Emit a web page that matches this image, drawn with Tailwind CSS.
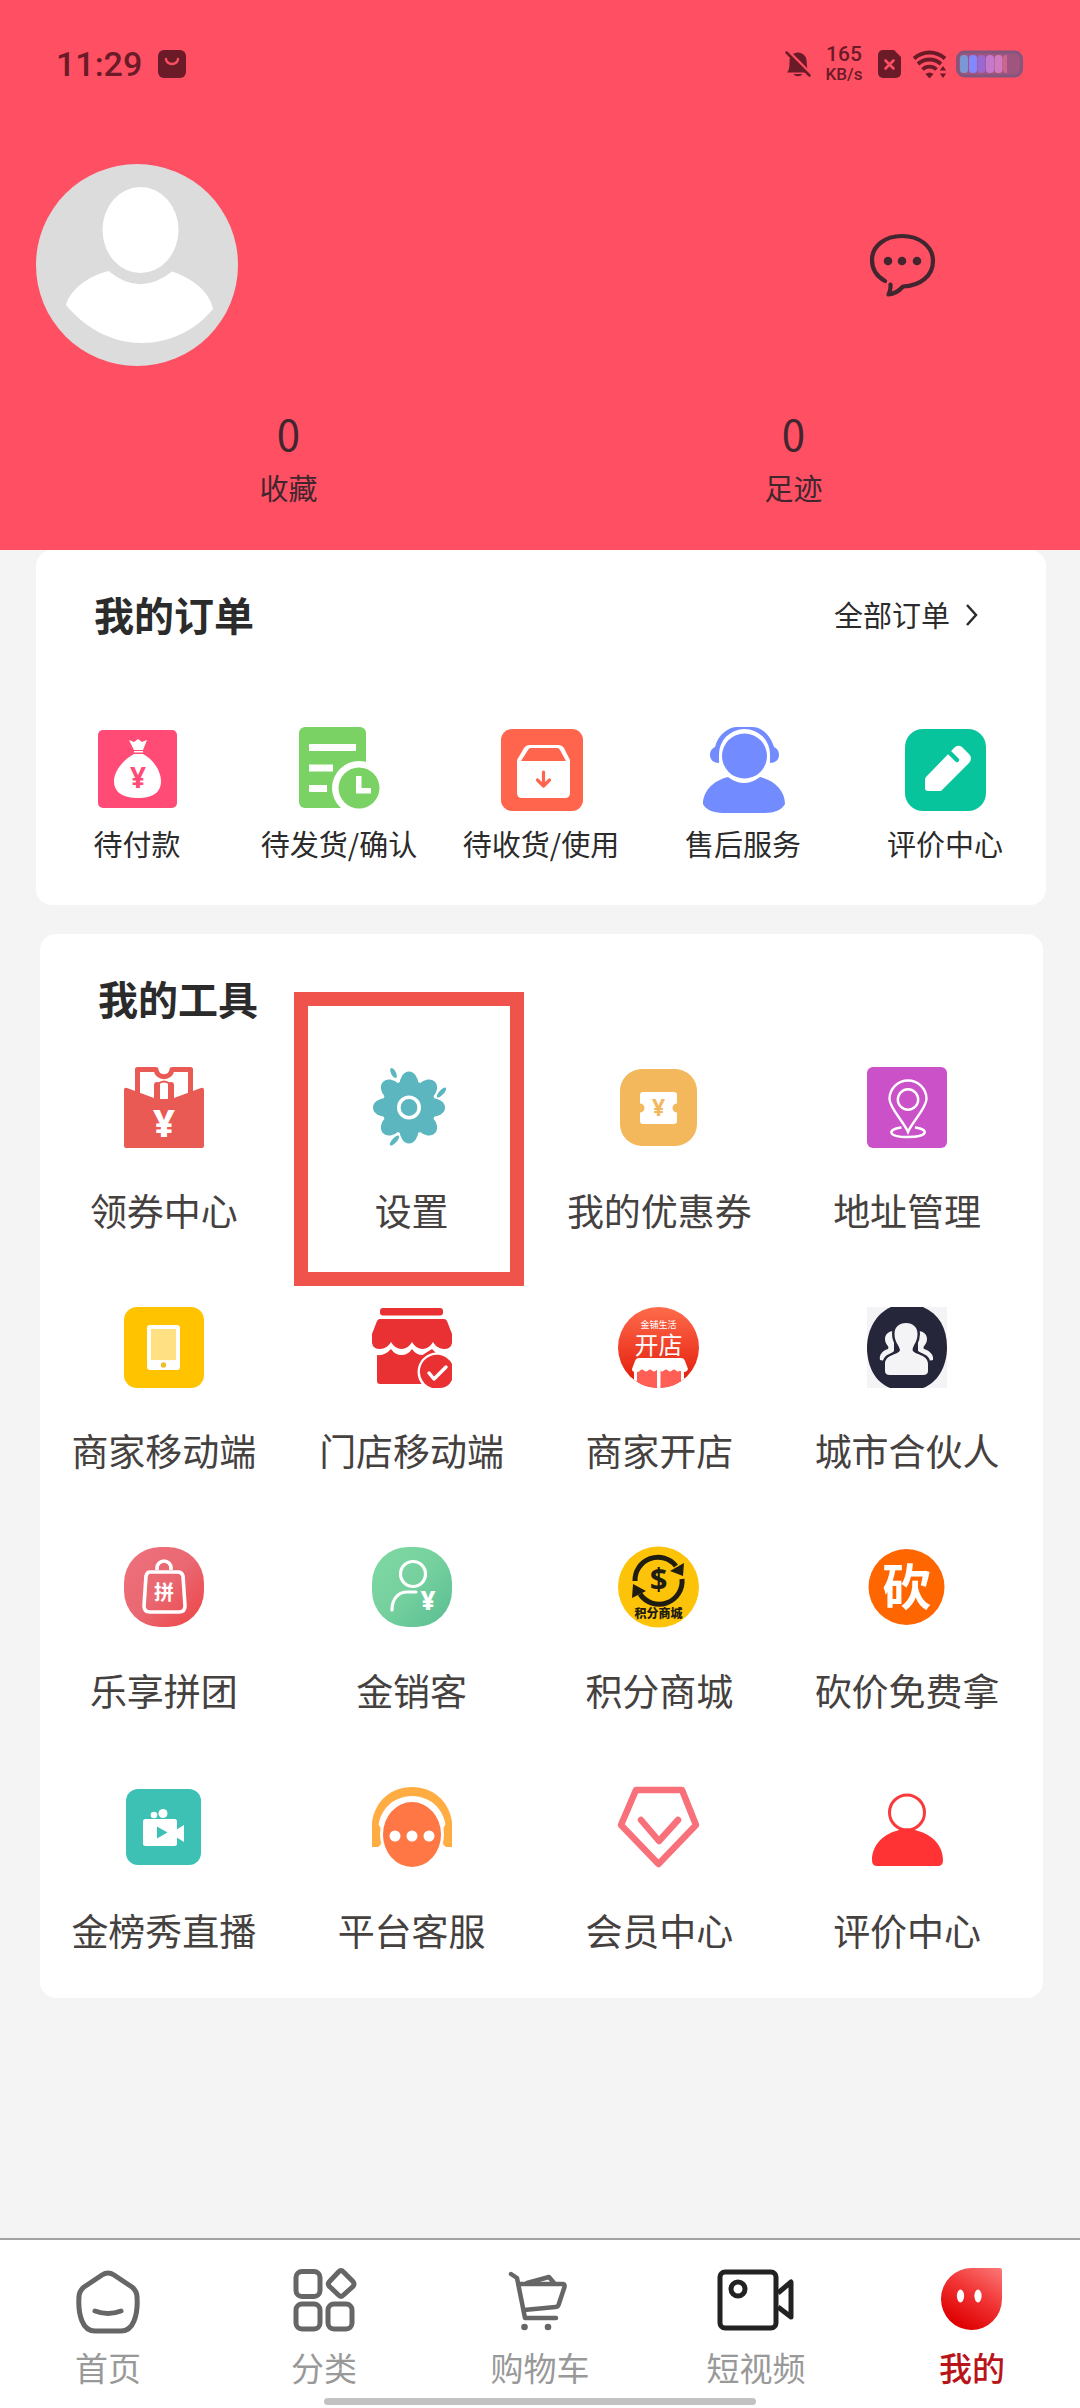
<!DOCTYPE html>
<html lang="zh-CN">
<head>
    <meta charset="UTF-8">
    <meta name="viewport" content="width=device-width, initial-scale=1.0">
    <title>我的</title>
    <script src="https://cdn.jsdelivr.net/npm/@tailwindcss/browser@4"></script>
</head>
<body class="min-h-screen flex flex-col bg-[#f4f4f4] font-['Noto_Sans_CJK_SC',sans-serif] text-[#2b2b2b]">
    <!-- Header -->
    <header class="bg-[#ff4f63] pb-[45px]">
        <!-- Status bar -->
        <div class="h-32 px-14 flex items-center justify-between text-[#6b1a28]">
            <div class="flex items-center gap-4">
                <span class="font-[Roboto] font-medium text-[34px] leading-10">11:29</span>
                <svg class="w-7 h-7" viewBox="0 0 28 28">
                    <rect width="28" height="28" rx="6" fill="currentColor"/>
                    <path d="M8 9a6 5 0 0 0 12 0" fill="none" stroke="#ff4f63" stroke-width="2.4" stroke-linecap="round"/>
                </svg>
            </div>
            <div class="flex items-center">
                <svg class="w-7 h-7" viewBox="0 0 28 28">
                    <path d="M3 22.500C5 20 5.500 18 5.500 12a8.500 8.500 0 0 1 17-2c.5 4 0 8 2 12.500zM9.500 24h9a5 4 0 0 1-9 0z" fill="currentColor"/>
                    <path d="M4 1l24 24" stroke="#ff4f63" stroke-width="3"/>
                    <path d="M2.500 2.500l23 23" stroke="currentColor" stroke-width="2.500" stroke-linecap="round"/>
                </svg>
                <div class="ml-3 w-10 text-center font-[Roboto] font-medium">
                    <div class="text-[21px] leading-5">165</div>
                    <div class="text-[17px] leading-5">KB/s</div>
                </div>
                <svg class="ml-3.5 w-6 h-7" viewBox="0 0 24 28">
                    <path d="M5 0h11l7 7v16a5 5 0 0 1-5 5H5a5 5 0 0 1-5-5V5a5 5 0 0 1 5-5z" fill="currentColor"/>
                    <path d="M7.500 10.500l8 8m0-8l-8 8" stroke="#ff4f63" stroke-width="2.600" stroke-linecap="round"/>
                </svg>
                <svg class="ml-2.5 w-9 h-7" viewBox="0 0 36 28">
                    <g fill="none" stroke="currentColor" stroke-width="3.800">
                        <path d="M2 8.500a23 23 0 0 1 31 0"/>
                        <path d="M6 14a17 17 0 0 1 23 0"/>
                        <path d="M10.500 19.500a10 10 0 0 1 14 0"/>
                    </g>
                    <path d="M13.500 24a6 6 0 0 1 8 0l-4 4.500zM31 16l3.200 4.500h-6.400zM31 28l3.200-4.500h-6.400z" fill="currentColor"/>
                </svg>
                <svg class="ml-2 w-[68px] h-7" viewBox="0 0 68 28">
                    <rect x="1.500" y="2" width="64" height="24" rx="7" fill="#9f557e" stroke="#84567e" stroke-width="3"/>
                    <rect x="4" y="5" width="8" height="18" rx="3.500" fill="#7c98d4"/>
                    <rect x="13" y="5" width="8" height="18" rx="3.500" fill="#8488ff"/>
                    <rect x="21.500" y="5" width="8" height="18" rx="3.500" fill="#9a68d0"/>
                    <rect x="30" y="5" width="8" height="18" rx="3.500" fill="#c678cc"/>
                    <rect x="38.500" y="5" width="8" height="18" rx="3.500" fill="#d07bbd"/>
                    <path d="M51 5h-1a3 3 0 0 0-3 3v12a3 3 0 0 0 3 3h1z" fill="#cc6690"/>
                </svg>
            </div>
        </div>

        <!-- Profile -->
        <div class="pt-9 pl-9 pr-36 flex items-center justify-between">
            <svg class="w-[202px] h-[202px]" viewBox="0 0 202 202">
                <circle cx="101" cy="101" r="101" fill="#dcdcdc"/>
                <ellipse cx="104.500" cy="66" rx="38" ry="43" fill="#fff"/>
                <path d="M72.500 107Q104 133 136 107.500C156 114 174 128 177 145C140 190 72 192 30 141C34 126 52 112 72.500 107z" fill="#fff"/>
            </svg>
            <button type="button" aria-label="消息">
                <svg class="w-[68px] h-[66px]" viewBox="867 231 68 66">
                    <path d="M884 280C875 275 871 267 871 259C871 245 884 235 901 235S932 245 932 260S919 285 902 285.500C898 290 893 293 887.500 293.500Q890 289 889.500 283.500" fill="none" stroke="#42262f" stroke-width="4.200" stroke-linecap="round" stroke-linejoin="round"/>
                    <circle cx="887" cy="260" r="4.300" fill="#42262f"/>
                    <circle cx="901" cy="260" r="4.300" fill="#42262f"/>
                    <circle cx="916" cy="260" r="4.300" fill="#42262f"/>
                </svg>
            </button>
        </div>

        <!-- Stats -->
        <div class="mt-[43px] ml-9 mr-[34px] grid grid-cols-2 text-center text-[#42262f]">
            <a href="#" class="flex flex-col gap-3">
                <span class="text-[42px] leading-12">0</span>
                <span class="text-[29px] leading-9">收藏</span>
            </a>
            <a href="#" class="flex flex-col gap-3">
                <span class="text-[42px] leading-12">0</span>
                <span class="text-[29px] leading-9">足迹</span>
            </a>
        </div>
    </header>

    <main>
        <!-- My orders -->
        <section class="ml-9 mr-[34px] bg-white rounded-2xl pt-10 pb-11">
            <div class="pl-[58px] pr-[62px] flex items-center justify-between">
                <h2 class="text-[40px] leading-12 font-bold">我的订单</h2>
                <a href="#" class="flex items-center gap-2.5 text-[29px] leading-9">
                    全部订单
                    <svg class="w-6 h-7" viewBox="0 0 24 28"><path d="M7 5l9 10-9 10" fill="none" stroke="#2b2b2b" stroke-width="2.500"/></svg>
                </a>
            </div>
            <div class="mt-[88px] grid grid-cols-5 text-[29px] leading-9 whitespace-nowrap">
                <a href="#" class="flex flex-col items-center gap-[11px]">
                    <svg class="w-[88px] h-[88px]" viewBox="0 0 88 88">
                        <rect x="5" y="4" width="79" height="78" rx="5" fill="#ff4b76"/>
                        <path d="M36 14l5 2 4-3 4 3 5-2-4 10h-9zM41 25h9v1.500h-9zM41 28h9C60 33 68 45 68 55C68 67 59 72 45 72S21 67 21 55C21 45 31 33 41 28z" fill="#fff"/>
                        <text x="45" y="62" text-anchor="middle" font-family="Open Sans" font-size="28" font-weight="700" fill="#ff4b76">¥</text>
                    </svg>
                    <span>待付款</span>
                </a>
                <a href="#" class="flex flex-col items-center gap-[11px]">
                    <svg class="w-[88px] h-[88px]" viewBox="0 0 88 88">
                        <rect x="4" y="1" width="67" height="81" rx="6" fill="#7bd264"/>
                        <path d="M14 18h47v7H14zM14 38.500h24v7H14zM14 59h18v7H14z" fill="#fff"/>
                        <circle cx="64" cy="62" r="27" fill="#fff"/>
                        <circle cx="64" cy="62" r="20.500" fill="#7bd264"/>
                        <path d="M61 50h5.500v12H76v5.500H61z" fill="#fff"/>
                    </svg>
                    <span>待发货/确认</span>
                </a>
                <a href="#" class="flex flex-col items-center gap-[11px]">
                    <svg class="w-[88px] h-[88px]" viewBox="0 0 88 88">
                        <rect x="4" y="3" width="82" height="82" rx="11" fill="#ff654d"/>
                        <path d="M33 19h28q4 0 6 3l6 12v33q0 5-5 5H25q-5 0-5-5V34l7-12q2-3 6-3zM24 35h45l-6-11q-1-2-3-2H34q-2 0-3 2z" fill="#fff" fill-rule="evenodd"/>
                        <path d="M46.500 46v13M40.500 54l6 6 6-6" fill="none" stroke="#ff654d" stroke-width="3.200" stroke-linecap="round" stroke-linejoin="round"/>
                    </svg>
                    <span>待收货/使用</span>
                </a>
                <a href="#" class="flex flex-col items-center gap-[11px]">
                    <svg class="w-[88px] h-[88px]" viewBox="0 0 88 88">
                        <path d="M16 21C19 8 30 1 38 1H53C62 1 71 8 75 21C79 23 80 26 80 29C80 34 76 37 71 37V28A25.500 25 0 0 0 20 28V37C15 37 11 34 11 29C11 26 12 23 16 21z" fill="#728cff"/>
                        <circle cx="45.500" cy="30" r="22.500" fill="#728cff"/>
                        <path d="M29 51Q45 63 61 51C77 55 86 66 86 78C83 84 75 87 66 87H24C14 87 6 83 4 78C4 66 13 55 29 51z" fill="#728cff"/>
                    </svg>
                    <span>售后服务</span>
                </a>
                <a href="#" class="flex flex-col items-center gap-[11px]">
                    <svg class="w-[88px] h-[88px]" viewBox="0 0 88 88">
                        <rect x="4" y="3" width="81" height="82" rx="18" fill="#08c49c"/>
                        <path d="M25 51L53 22Q57 18 61 21L68 28Q72 32 68 37L40 65H27Q24 65 24 62V54Q24 52 25 51z" fill="#fff"/>
                        <path d="M47 25L56 34" stroke="#08c49c" stroke-width="4.500" stroke-linecap="round"/>
                    </svg>
                    <span>评价中心</span>
                </a>
            </div>
        </section>

        <!-- My tools -->
        <section class="mt-[29px] ml-10 mr-[37px] bg-white rounded-2xl pt-10 pb-[46px]">
            <h2 class="pl-[58px] text-[40px] leading-12 font-bold">我的工具</h2>
            <div class="mt-[42px] mr-3 grid grid-cols-4 gap-y-[72px] text-[37px] leading-11 text-[#45413f] whitespace-nowrap">
                <a href="#" class="flex flex-col items-center gap-9">
                    <svg class="w-[88px] h-[88px]" viewBox="0 0 88 88">
                        <path d="M17.500 32V5.500H36C37 15 51 15 52 5.500H70.500V32" fill="none" stroke="#e85a53" stroke-width="5" stroke-linejoin="round"/>
                        <path d="M4 26q0-3 3-2l27 10V21q0-3 3-3t3 3v14h8V21q0-3 3-3t3 3v13l27-10q3-1 3 2v56q0 2-2 2H6q-2 0-2-2z" fill="#e85a53"/>
                        <path d="M38 20Q44 15 50 20" fill="none" stroke="#e85a53" stroke-width="2"/>
                        <text x="44" y="73" text-anchor="middle" font-family="Noto Sans" font-size="38" font-weight="800" fill="#fff">¥</text>
                    </svg>
                    <span>领券中心</span>
                </a>
                <a href="#" class="relative flex flex-col items-center gap-9">
                    <svg class="w-[88px] h-[88px]" viewBox="0 0 88 88">
                        <g fill="#5cb6bf">
                            <circle cx="41" cy="43.500" r="27"/>
                            <ellipse cx="41" cy="21" rx="9.500" ry="13.500"/>
                            <ellipse cx="41" cy="66" rx="9.500" ry="13.500"/>
                            <ellipse cx="18.500" cy="43.500" rx="13.500" ry="9.500"/>
                            <ellipse cx="63.500" cy="43.500" rx="13.500" ry="9.500"/>
                            <ellipse cx="24" cy="26.500" rx="9.500" ry="12.500" transform="rotate(-45 24 26.500)"/>
                            <ellipse cx="58" cy="26.500" rx="9.500" ry="12.500" transform="rotate(45 58 26.500)"/>
                            <ellipse cx="24" cy="60.500" rx="9.500" ry="12.500" transform="rotate(45 24 60.500)"/>
                            <ellipse cx="58" cy="60.500" rx="9.500" ry="12.500" transform="rotate(-45 58 60.500)"/>
                            <ellipse cx="25.500" cy="9" rx="2.400" ry="5.500" transform="rotate(-28 25.500 9)"/>
                            <ellipse cx="73.500" cy="28.500" rx="2.400" ry="6.500" transform="rotate(42 73.500 28.500)"/>
                            <ellipse cx="26.500" cy="76.500" rx="2.400" ry="6.500" transform="rotate(42 26.500 76.500)"/>
                        </g>
                        <circle cx="41" cy="43.500" r="10.200" fill="none" stroke="#fff" stroke-width="3.600"/>
                    </svg>
                    <span>设置</span>
                    <!-- Highlight frame -->
                    <div class="absolute -top-[72px] left-[6px] w-[230px] h-[294px] border-[14px] border-[#f0524c]"></div>
                </a>
                <a href="#" class="flex flex-col items-center gap-9">
                    <svg class="w-[88px] h-[88px]" viewBox="0 0 88 88">
                        <rect x="5" y="5" width="77" height="77" rx="22" fill="#f3b75c"/>
                        <path d="M28 28h31q3 0 3 3v8.500a4.500 4.500 0 0 0 0 9V57q0 3-3 3H28q-3 0-3-3v-8.500a4.500 4.500 0 0 0 0-9V31q0-3 3-3z" fill="#fff"/>
                        <text x="43.500" y="52" text-anchor="middle" font-family="Noto Sans" font-size="23" font-weight="700" fill="#f3b75c">¥</text>
                    </svg>
                    <span>我的优惠券</span>
                </a>
                <a href="#" class="flex flex-col items-center gap-9">
                    <svg class="w-[88px] h-[88px]" viewBox="0 0 88 88">
                        <rect x="4" y="3" width="80" height="81" rx="6" fill="#cb51c9"/>
                        <g fill="none" stroke="#fff" stroke-width="2.400">
                            <path d="M45 68C41 58 26.500 44 26.500 35A18.500 18.500 0 0 1 63.500 35C63.500 44 49 58 45 68z"/>
                            <circle cx="45" cy="35.500" r="10.200"/>
                            <path d="M38.500 63.500C24 65 24 73 45 73S66 65 52 63.500"/>
                        </g>
                    </svg>
                    <span>地址管理</span>
                </a>

                <a href="#" class="flex flex-col items-center gap-9">
                    <svg class="w-[88px] h-[88px]" viewBox="0 0 88 88">
                        <rect x="4" y="3" width="80" height="81" rx="13" fill="#ffc300"/>
                        <rect x="27" y="21" width="33" height="45" rx="3" fill="#fff"/>
                        <rect x="31" y="25" width="25" height="31" fill="#ffe082"/>
                        <circle cx="43.500" cy="61" r="2.700" fill="#eebf2c"/>
                    </svg>
                    <span>商家移动端</span>
                </a>
                <a href="#" class="flex flex-col items-center gap-9">
                    <svg class="w-[88px] h-[88px]" viewBox="0 0 88 88">
                        <rect x="12" y="4" width="63" height="7.500" rx="3" fill="#e93032"/>
                        <path d="M12 15h64q2 0 3 2l5 13v9q-1 6-8 6-7 0-11-7-4 7-10.500 7T44 38q-4 7-10.500 7T23 38q-4 7-11 7-7 0-8-6v-9l5-13q1-2 3-2z" fill="#e93032"/>
                        <path d="M9 51q8 1 14-6 4 6 10.500 6T44 45q4 6 10.500 6L64 45l4 4v31H12q-3 0-3-3z" fill="#e93032"/>
                        <circle cx="69" cy="68" r="19.500" fill="#fff"/>
                        <path d="M84 60v16q-4 8-12 8h-8A17 17 0 1 1 84 60z" fill="#e93032"/>
                        <path d="M61 69l5 6 12-12" fill="none" stroke="#fff" stroke-width="3.500" stroke-linecap="round" stroke-linejoin="round"/>
                    </svg>
                    <span>门店移动端</span>
                </a>
                <a href="#" class="flex flex-col items-center gap-9">
                    <svg class="w-[88px] h-[88px]" viewBox="0 0 88 88">
                        <defs>
                            <linearGradient id="shop" x1="0" y1="0" x2="0" y2="1"><stop stop-color="#ff6f4e"/><stop offset=".8" stop-color="#e62412"/></linearGradient>
                            <clipPath id="shopClip"><circle cx="43.500" cy="43.500" r="40.500"/></clipPath>
                        </defs>
                        <g clip-path="url(#shopClip)">
                            <rect width="88" height="88" fill="url(#shop)"/>
                            <rect x="19" y="60" width="50" height="26" fill="#ff5f55"/>
                            <path d="M19 60h3v25h-3zM42 60h3.500v25H42zM66 60h3v25h-3z" fill="#fff"/>
                            <path d="M22 54h44q3 0 4 3l3 8q-1 3-4 3t-4-1.500q-2 2-4 0t-4 0-4 0-4 0-4 0-4 0-4 0-4 0-4 0-4 0q-1 2-5 1.500-3 0-3-3l3-8q1-3 4-3z" fill="#fff"/>
                        </g>
                        <text x="43.500" y="24" text-anchor="middle" font-family="Noto Sans CJK SC" font-size="9" fill="#fff">金铺生活</text>
                        <text x="43.500" y="50" text-anchor="middle" font-family="Noto Sans CJK SC" font-size="24" fill="#fff">开店</text>
                    </svg>
                    <span>商家开店</span>
                </a>
                <a href="#" class="flex flex-col items-center gap-9">
                    <svg class="w-[88px] h-[88px]" viewBox="0 0 88 88">
                        <rect x="4" y="3" width="80" height="81" fill="#f4f4f6"/>
                        <path d="M28 3h32C76 10 84 24 84 43.500S74 79 60 84H27C12 78 4 62 4 43.500S14 9 28 3z" fill="#26263a"/>
                        <path d="M22 35C22 30 26 27 31 27V47L22 57L17 56C16 51 19 47 25 45C27 42 22 41 22 35zM64 35C64 30 60 27 55 27V47L65 57L70 56C71 51 67 47 61 45C59 42 64 41 64 35z" fill="#f4f4f6"/>
                        <path d="M43 19C50 19 54.500 23 54.500 30C54.500 38 50 41 49.500 46C51 51 65 50 65 60V67Q65 71 60 71H27Q22 71 22 67V60C22 50 36 51 37 46C36 41 31.500 38 31.500 30C31.500 23 36 19 43 19z" fill="#f4f4f6" stroke="#26263a" stroke-width="5" paint-order="stroke"/>
                    </svg>
                    <span>城市合伙人</span>
                </a>

                <a href="#" class="flex flex-col items-center gap-9">
                    <svg class="w-[88px] h-[88px]" viewBox="0 0 88 88">
                        <defs><linearGradient id="group" x1="0" y1="0" x2="1" y2="1"><stop stop-color="#ef727c"/><stop offset=".5" stop-color="#e96872"/><stop offset="1" stop-color="#ee4445"/></linearGradient></defs>
                        <rect x="4" y="3" width="80" height="80" rx="36" fill="url(#group)"/>
                        <g fill="none" stroke="#fff" stroke-width="3.600">
                            <path d="M30 28h28q4 0 5 4l2 30q0 6-6 6H30q-6 0-6-6l2-30q1-4 4-4z"/>
                            <path d="M37 26v-2a7 7 0 0 1 14 0v2"/>
                        </g>
                        <text x="44" y="56" text-anchor="middle" font-family="Noto Sans CJK SC" font-size="20" font-weight="700" fill="#fff">拼</text>
                    </svg>
                    <span>乐享拼团</span>
                </a>
                <a href="#" class="flex flex-col items-center gap-9">
                    <svg class="w-[88px] h-[88px]" viewBox="0 0 88 88">
                        <defs><linearGradient id="sales" x1="0" y1="0" x2="1" y2="1"><stop stop-color="#7ed9a3"/><stop offset=".5" stop-color="#75d09e"/><stop offset="1" stop-color="#58bd92"/></linearGradient></defs>
                        <rect x="4" y="3" width="80" height="80" rx="36" fill="url(#sales)"/>
                        <g fill="none" stroke="#fff" stroke-width="3.200" stroke-linecap="round">
                            <circle cx="45" cy="30" r="12.500"/>
                            <path d="M24 66C24 54 31 48 39 48H48"/>
                        </g>
                        <text x="60" y="66" text-anchor="middle" font-family="Noto Sans" font-size="26" font-weight="800" fill="#fff">¥</text>
                    </svg>
                    <span>金销客</span>
                </a>
                <a href="#" class="flex flex-col items-center gap-9">
                    <svg class="w-[88px] h-[88px]" viewBox="0 0 88 88">
                        <circle cx="43.500" cy="43" r="40.500" fill="#fdc309"/>
                        <g fill="none" stroke="#1f1c10" stroke-width="5">
                            <path d="M20 37A23 23 0 0 1 61 22"/>
                            <path d="M67 35A23 23 0 0 1 25 50"/>
                        </g>
                        <path d="M69 19L68 32 55 27zM17 54L18 40 31 47z" fill="#1f1c10"/>
                        <text x="43.500" y="46" text-anchor="middle" font-family="Open Sans" font-size="31" font-weight="700" fill="#1f1c10">$</text>
                        <text x="43.500" y="74" text-anchor="middle" font-family="Noto Sans CJK SC" font-size="12" font-weight="900" fill="#1f1c10">积分商城</text>
                    </svg>
                    <span>积分商城</span>
                </a>
                <a href="#" class="flex flex-col items-center gap-9">
                    <svg class="w-[88px] h-[88px]" viewBox="0 0 88 88">
                        <circle cx="43.500" cy="43" r="38" fill="#ff6600"/>
                        <text x="43.500" y="61" text-anchor="middle" font-family="Noto Sans CJK SC" font-size="49" font-weight="700" fill="#fff">砍</text>
                    </svg>
                    <span>砍价免费拿</span>
                </a>

                <a href="#" class="flex flex-col items-center gap-9">
                    <svg class="w-[88px] h-[88px]" viewBox="0 0 88 88">
                        <rect x="6" y="5" width="75" height="76" rx="12" fill="#3cc1b4"/>
                        <circle cx="34" cy="31" r="3.300" fill="#fff"/>
                        <circle cx="43" cy="29.500" r="4.500" fill="#fff"/>
                        <rect x="23" y="35" width="34" height="27" rx="2.500" fill="#fff"/>
                        <path d="M56 46l8-5v17l-8-5z" fill="#fff"/>
                        <path d="M37 42.500l10.500 6-10.500 6z" fill="#3cc1b4"/>
                    </svg>
                    <span>金榜秀直播</span>
                </a>
                <a href="#" class="flex flex-col items-center gap-9">
                    <svg class="w-[88px] h-[88px]" viewBox="0 0 88 88">
                        <path d="M4 46V38C7 17 23 3 44 3S81 17 84 38V46z" fill="#ffad42"/>
                        <path d="M10 52C8 28 24 12 44 12S80 28 78 52z" fill="#fff"/>
                        <path d="M4 40h6q5 6 5 12 0 8-5 11H4zM84 40h-6q-5 6-5 12 0 8 5 11h6z" fill="#ffad42"/>
                        <ellipse cx="44" cy="50.500" rx="32" ry="34" fill="#fff"/>
                        <ellipse cx="44" cy="50.500" rx="29" ry="32.500" fill="#ff7744"/>
                        <circle cx="27" cy="52" r="5.500" fill="#fff"/>
                        <circle cx="44" cy="52" r="5.500" fill="#fff"/>
                        <circle cx="61" cy="52" r="5.500" fill="#fff"/>
                    </svg>
                    <span>平台客服</span>
                </a>
                <a href="#" class="flex flex-col items-center gap-9">
                    <svg class="w-[88px] h-[88px]" viewBox="0 0 88 88">
                        <g fill="none" stroke="#f87079" stroke-width="6.500" stroke-linecap="round" stroke-linejoin="round">
                            <path d="M21 6H67L81 41L43.500 80L6 41z"/>
                            <path d="M26 36L44 57L63 36"/>
                        </g>
                    </svg>
                    <span>会员中心</span>
                </a>
                <a href="#" class="flex flex-col items-center gap-9">
                    <svg class="w-[88px] h-[88px]" viewBox="0 0 88 88">
                        <circle cx="44" cy="28.500" r="17.500" fill="none" stroke="#f93a3c" stroke-width="3"/>
                        <path d="M33 47Q44 42 55 47C70 51 80 62 80 76Q80 82 75 82H14Q9 82 9 76C9 62 19 51 33 47z" fill="#ff3333"/>
                    </svg>
                    <span>评价中心</span>
                </a>
            </div>
        </section>
    </main>

    <!-- Tab bar -->
    <nav class="mt-auto bg-white border-t-2 border-[#a3a3a3] pt-5 pb-[3px]">
        <div class="grid grid-cols-5 text-[33px] leading-10 text-[#999]">
            <a href="#" class="flex flex-col items-center gap-[7px]">
                <svg class="w-20 h-20" viewBox="-4 -4 80 80" fill="none" stroke="#666" stroke-width="5" stroke-linecap="round" stroke-linejoin="round">
                    <path d="M30 11Q36 7 42 11L60 23Q65 27 65 33Q66 47 62 57Q58 67 49 67H23Q14 67 10 57Q6 47 7 33Q7 27 12 23z"/>
                    <path d="M23 47Q36 52 49 47"/>
                </svg>
                <span>首页</span>
            </a>
            <a href="#" class="flex flex-col items-center gap-[7px]">
                <svg class="w-20 h-20" viewBox="-4 -4 80 80" fill="none" stroke="#666" stroke-width="5" stroke-linejoin="round">
                    <rect x="8" y="7.500" width="24" height="25" rx="6"/>
                    <rect x="8" y="40" width="24" height="25" rx="6"/>
                    <rect x="40" y="40" width="24" height="25" rx="6"/>
                    <path d="M50.500 8Q53 5 55.500 8L65 17.500Q67 20 65 22.500L55.500 31Q53 34 50.500 31L41.500 22.500Q39 20 41.500 17.500z"/>
                </svg>
                <span>分类</span>
            </a>
            <a href="#" class="flex flex-col items-center gap-[7px]">
                <svg class="w-20 h-20" viewBox="-4 -4 80 80" fill="none" stroke="#666" stroke-width="4.500" stroke-linecap="round" stroke-linejoin="round">
                    <path d="M7 10l6 4 8 40h31"/>
                    <path d="M16 20h43q2 0 1.500 3l-6 18q-1 2-3 2L20 46"/>
                    <path d="M23 19l22-6 5 6"/>
                    <circle cx="20.500" cy="63" r="3.300" fill="#666" stroke="none"/>
                    <circle cx="44" cy="63" r="3.300" fill="#666" stroke="none"/>
                </svg>
                <span>购物车</span>
            </a>
            <a href="#" class="flex flex-col items-center gap-[7px]">
                <svg class="w-20 h-20" viewBox="-4 -4 80 80" fill="none" stroke="#222" stroke-width="5" stroke-linejoin="round">
                    <rect x="0" y="8" width="56" height="56" rx="5"/>
                    <circle cx="18" cy="25" r="7"/>
                    <path d="M58 29L71 18V53L58 43"/>
                </svg>
                <span>短视频</span>
            </a>
            <a href="#" class="flex flex-col items-center gap-[7px] text-[#b8141a] font-medium">
                <svg class="w-20 h-20" viewBox="-4 -4 80 80">
                    <defs><linearGradient id="mine" x1="1" y1="0" x2=".4" y2="1"><stop stop-color="#fc7878"/><stop offset=".5" stop-color="#f13434"/><stop offset="1" stop-color="#df0000"/></linearGradient></defs>
                    <path d="M36 4H64Q66 4 66 6V35A30.500 31 0 1 1 36 4z" fill="url(#mine)"/>
                    <ellipse cx="24.500" cy="32" rx="3.600" ry="6.500" fill="#fff"/>
                    <ellipse cx="42" cy="32" rx="3.600" ry="6.500" fill="#fff"/>
                </svg>
                <span>我的</span>
            </a>
        </div>
        <div class="mt-[11px] mx-auto w-2/5 h-[7px] rounded-full bg-[#c2c2c2]"></div>
    </nav>
</body>
</html>
